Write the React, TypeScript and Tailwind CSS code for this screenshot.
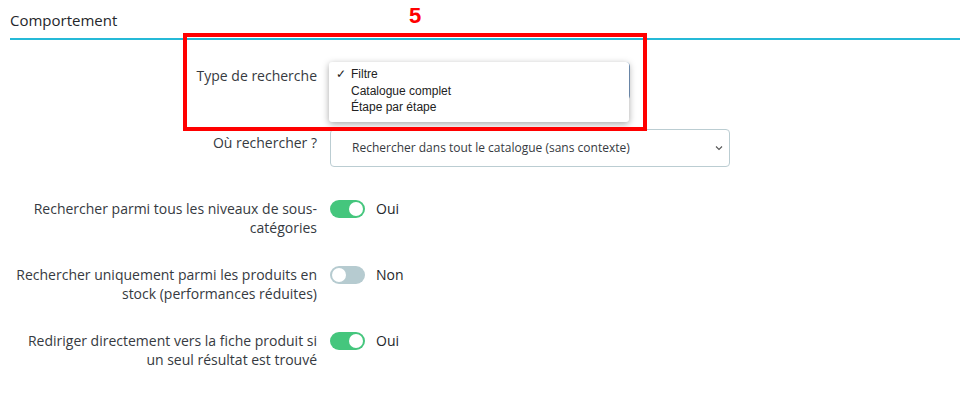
import React from 'react';

interface ToggleRowProps {
  label: React.ReactNode;
  on: boolean;
}

const ToggleRow: React.FC<ToggleRowProps> = ({ label, on }) => {
  return (
    <div className="flex mt-[28px]">
      <div className="w-[317px] text-right text-[14px] leading-[19px]">{label}</div>
      <div className="ml-[13px] flex items-center h-[19px]">
        <span
          className={
            on
              ? 'relative w-[35px] h-[18px] rounded-full bg-[#45c67d]'
              : 'relative w-[35px] h-[18px] rounded-full bg-[#b6cbd0]'
          }
        >
          <span
            className={
              on
                ? 'absolute top-[2px] right-[2px] w-[14px] h-[14px] rounded-full bg-white'
                : 'absolute top-[2px] left-[2px] w-[14px] h-[14px] rounded-full bg-white'
            }
          />
        </span>
        <span className="ml-[11px] text-[14px] text-[#25272b]">{on ? 'Oui' : 'Non'}</span>
      </div>
    </div>
  );
};

export default function App() {
  return (
    <div className="relative w-[975px] h-[411px] bg-white text-[#363a41] font-['Open_Sans',sans-serif] overflow-hidden">
      <div className="pl-[10px] pr-[15px]">
        <div className="pt-[10px] pb-[8px] leading-[20px] text-[15px] text-[#25272b] border-b-2 border-[#25b9d7]">
          Comportement
        </div>
      </div>

      {/* Type de recherche */}
      <div className="flex mt-[22px]">
        <div className="w-[317px] text-right text-[14px] leading-[19px] pt-[4px]">Type de recherche</div>
        <div className="ml-[13px] relative w-[300px] h-[38px] border border-[#7c9ec4] rounded-[4px]">
          <div className="absolute -left-[2px] -top-[1px] w-[300px] h-[60px] bg-white rounded-[3px] shadow-[0_2px_7px_rgba(0,0,0,0.35)] pt-[4px] font-['Liberation_Sans',Arial,sans-serif] text-[12px] leading-[16.5px] text-[#222]">
            <div className="flex">
              <span className="w-[22px] pl-[7px]">✓</span>
              <span>Filtre</span>
            </div>
            <div className="pl-[22px]">Catalogue complet</div>
            <div className="pl-[22px]">Étape par étape</div>
          </div>
        </div>
      </div>

      {/* Où rechercher */}
      <div className="flex mt-[29px]">
        <div className="w-[317px] text-right text-[14px] leading-[19px] pt-[4px]">Où rechercher ?</div>
        <div className="ml-[13px] w-[400px] h-[38px] border border-[#bbcdd2] rounded-[4px] flex items-center justify-between pl-[21px] pr-[6px]">
          <span className="text-[12px]">Rechercher dans tout le catalogue (sans contexte)</span>
          <svg width="8" height="6" viewBox="0 0 8 6" fill="none">
            <path d="M1 1.5 L4 4.5 L7 1.5" stroke="#555" strokeWidth="1.1" />
          </svg>
        </div>
      </div>

      <div className="flex flex-col pt-[4px]">
        <ToggleRow
          on
          label={
            <>
              Rechercher parmi tous les niveaux de sous-
              <br />
              catégories
            </>
          }
        />
        <ToggleRow
          on={false}
          label={
            <>
              Rechercher uniquement parmi les produits en
              <br />
              stock (performances réduites)
            </>
          }
        />
        <ToggleRow
          on
          label={
            <>
              Rediriger directement vers la fiche produit si
              <br />
              un seul résultat est trouvé
            </>
          }
        />
      </div>

      {/* annotation */}
      <div className="absolute left-[409px] top-[3px] font-['Liberation_Sans',Arial,sans-serif] font-bold text-[22px] leading-[26px] text-[#ff0000]">
        5
      </div>
      <div className="absolute left-[183px] top-[33px] w-[464px] h-[98px] border-4 border-[#ff0000]" />
    </div>
  );
}
